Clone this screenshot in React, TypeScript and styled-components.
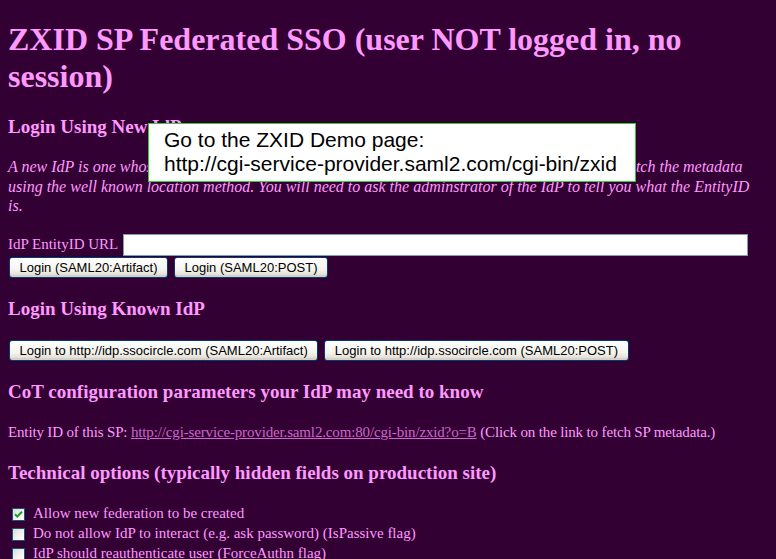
import React from "react";
import styled, { createGlobalStyle } from "styled-components";

const GlobalStyle = createGlobalStyle`
  html, body {
    margin: 0;
    padding: 0;
    background: #330033;
  }
  body {
    color: #ff99ff;
    font-family: "Liberation Serif", "Times New Roman", serif;
    font-size: 15px;
  }
`;

const Page = styled.div`
  position: relative;
  width: 776px;
  height: 559px;
  overflow: hidden;
  padding: 0 8px;
  box-sizing: border-box;
`;

const Title = styled.h1`
  margin: 21px 0 21px;
  font-size: 32px;
  font-weight: bold;
  line-height: 36.8px;
`;

const Heading = styled.h3`
  margin: 20px 0;
  font-size: 19px;
  font-weight: bold;
  line-height: 21.5px;
  white-space: nowrap;
`;

const Intro = styled.p`
  margin: 20px 0 18px;
  font-size: 16px;
  font-style: italic;
  line-height: 19.5px;
  white-space: nowrap;
`;

const Text = styled.p`
  margin: 20px 0;
  line-height: 19.5px;
  letter-spacing: -0.15px;
  white-space: nowrap;
`;

const Link = styled.a`
  color: #cc66cc;
  text-decoration: underline;
`;

const FieldRow = styled.div`
  display: flex;
  align-items: center;
  width: 740px;
  height: 22px;
  margin-top: 18px;
  white-space: nowrap;
`;

const UrlInput = styled.input`
  flex: 1;
  height: 22px;
  margin-left: 5px;
  box-sizing: border-box;
  border: 1px solid #7f9db9;
  background: #fff;
  padding: 0 3px;
  outline: none;
`;

const ButtonRow = styled.div<{ $top: number }>`
  display: flex;
  gap: 6px;
  margin-top: ${(p) => p.$top}px;
  padding-left: 1px;
`;

const XpButton = styled.button`
  height: 21px;
  padding: 0 9.5px;
  border: 1px solid #003c74;
  border-radius: 3px;
  background: linear-gradient(#ffffff 0%, #f5f4ef 60%, #dcd8cc 100%);
  box-shadow: inset 0 -2px 0 #d6d0c5;
  color: #000;
  font-family: "Liberation Sans", Arial, sans-serif;
  font-size: 13px;
  line-height: 19px;
  white-space: nowrap;
  cursor: pointer;
`;

const OptionList = styled.div`
  margin-top: 20px;
`;

const Option = styled.label`
  display: flex;
  align-items: center;
  height: 20px;
  white-space: nowrap;
`;

const Box = styled.span`
  display: inline-flex;
  align-items: center;
  justify-content: center;
  width: 13px;
  height: 13px;
  margin: 1px 8px 0 4px;
  box-sizing: border-box;
  border: 1px solid #1c5180;
  background: linear-gradient(135deg, #dcdcd7 0%, #f4f4f0 60%, #ffffff 100%);
`;

const Tooltip = styled.div`
  position: absolute;
  left: 148px;
  top: 123px;
  width: 488px;
  height: 59px;
  box-sizing: border-box;
  padding: 4px 0 0 15px;
  border: 1px solid #33cc33;
  background: #fff;
  color: #000;
  font-family: "Liberation Sans", Arial, sans-serif;
  font-size: 21px;
  line-height: 24px;
  white-space: nowrap;
`;

const Check = () => (
  <svg width="9" height="9" viewBox="0 0 9 9">
    <path d="M1 4.2 L3.3 6.5 L8 1.8" stroke="#21a121" strokeWidth="2" fill="none" />
  </svg>
);

const options = [
  { label: "Allow new federation to be created", checked: true },
  { label: "Do not allow IdP to interact (e.g. ask password) (IsPassive flag)", checked: false },
  { label: "IdP should reauthenticate user (ForceAuthn flag)", checked: false },
];

export default function App() {
  return (
    <>
      <GlobalStyle />
      <Page>
        <Title>
          ZXID SP Federated SSO (user NOT logged in, no session)
        </Title>

        <Heading>Login Using New IdP</Heading>
        <Intro>
          A new IdP is one whose metadata we do not have yet. We need to know the Entity ID in order to fetch the metadata
          <br />
          using the well known location method. You will need to ask the adminstrator of the IdP to tell you what the EntityID
          <br />
          is.
        </Intro>

        <FieldRow>
          IdP EntityID URL
          <UrlInput type="text" />
        </FieldRow>
        <ButtonRow $top={1}>
          <XpButton>Login (SAML20:Artifact)</XpButton>
          <XpButton>Login (SAML20:POST)</XpButton>
        </ButtonRow>

        <Heading>Login Using Known IdP</Heading>
        <ButtonRow $top={21}>
          <XpButton>Login to http://idp.ssocircle.com (SAML20:Artifact)</XpButton>
          <XpButton>Login to http://idp.ssocircle.com (SAML20:POST)</XpButton>
        </ButtonRow>

        <Heading>CoT configuration parameters your IdP may need to know</Heading>
        <Text>
          Entity ID of this SP:{" "}
          <Link href="#">http://cgi-service-provider.saml2.com:80/cgi-bin/zxid?o=B</Link>{" "}
          (Click on the link to fetch SP metadata.)
        </Text>

        <Heading>Technical options (typically hidden fields on production site)</Heading>
        <OptionList>
          {options.map((o) => (
            <Option key={o.label}>
              <Box>{o.checked && <Check />}</Box>
              {o.label}
            </Option>
          ))}
        </OptionList>

        <Tooltip>
          Go to the ZXID Demo page:
          <br />
          http://cgi-service-provider.saml2.com/cgi-bin/zxid
        </Tooltip>
      </Page>
    </>
  );
}
